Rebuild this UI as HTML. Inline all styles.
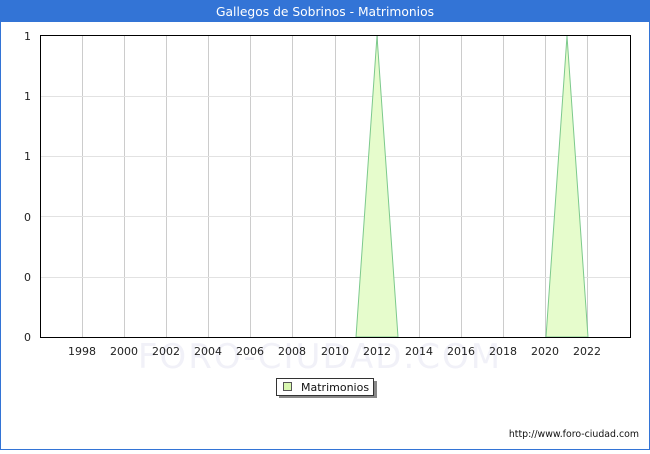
<!DOCTYPE html>
<html><head><style>
body{margin:0;width:650px;height:450px;overflow:hidden;background:#fff;font-family:"DejaVu Sans","Liberation Sans",sans-serif;}
</style></head><body>
<svg width="650" height="450" xmlns="http://www.w3.org/2000/svg" font-family="DejaVu Sans, Liberation Sans, sans-serif">
<rect x="0.5" y="0.5" width="649" height="449" fill="#fff" stroke="#3374d6"/>
<rect x="0" y="0" width="650" height="22" fill="#3374d6"/>
<text x="325" y="16" fill="#fff" font-size="12.3" text-anchor="middle">Gallegos de Sobrinos - Matrimonios</text>
<text x="320" y="368" fill="#f1f1f8" font-size="34" text-anchor="middle" letter-spacing="2">FORO-CIUDAD.COM</text>
<g stroke="#ccc" stroke-width="1">
<line x1="82.5" y1="35" x2="82.5" y2="337"/><line x1="124.5" y1="35" x2="124.5" y2="337"/>
<line x1="166.5" y1="35" x2="166.5" y2="337"/><line x1="208.5" y1="35" x2="208.5" y2="337"/>
<line x1="250.5" y1="35" x2="250.5" y2="337"/><line x1="292.5" y1="35" x2="292.5" y2="337"/>
<line x1="335.5" y1="35" x2="335.5" y2="337"/><line x1="377.5" y1="35" x2="377.5" y2="337"/>
<line x1="419.5" y1="35" x2="419.5" y2="337"/><line x1="461.5" y1="35" x2="461.5" y2="337"/>
<line x1="503.5" y1="35" x2="503.5" y2="337"/><line x1="545.5" y1="35" x2="545.5" y2="337"/>
<line x1="587.5" y1="35" x2="587.5" y2="337"/>
</g>
<g stroke="#e2e2e2" stroke-width="1">
<line x1="40" y1="96.5" x2="630" y2="96.5"/><line x1="40" y1="156.5" x2="630" y2="156.5"/>
<line x1="40" y1="216.5" x2="630" y2="216.5"/><line x1="40" y1="277.5" x2="630" y2="277.5"/>
</g>
<polygon points="356,337 377,36 398,337" fill="#e6fccc" stroke="#7cc98c" stroke-width="1"/>
<polygon points="546,337 567,36 588,337" fill="#e6fccc" stroke="#7cc98c" stroke-width="1"/>
<rect x="40.5" y="35.5" width="590" height="302" fill="none" stroke="#000" stroke-width="1"/>
<g font-size="11" fill="#222" text-anchor="end">
<text x="31" y="40">1</text><text x="31" y="100">1</text><text x="31" y="160">1</text>
<text x="31" y="221">0</text><text x="31" y="281">0</text><text x="31" y="341">0</text>
</g>
<g font-size="11" fill="#222" text-anchor="middle">
<text x="82" y="355">1998</text><text x="124" y="355">2000</text><text x="166" y="355">2002</text>
<text x="208" y="355">2004</text><text x="250" y="355">2006</text><text x="292" y="355">2008</text>
<text x="335" y="355">2010</text><text x="377" y="355">2012</text><text x="419" y="355">2014</text>
<text x="461" y="355">2016</text><text x="503" y="355">2018</text><text x="545" y="355">2020</text>
<text x="587" y="355">2022</text>
</g>
<rect x="279" y="381" width="98" height="17" fill="#888"/>
<rect x="276.5" y="378.5" width="97" height="17" fill="#fff" stroke="#333"/>
<rect x="283.5" y="382.5" width="8" height="8" fill="#d9f8b0" stroke="#555"/>
<text x="301" y="391" font-size="11" fill="#111">Matrimonios</text>
<text x="639" y="437" font-size="9.4" fill="#111" text-anchor="end">http://www.foro-ciudad.com</text>
</svg>
</body></html>
